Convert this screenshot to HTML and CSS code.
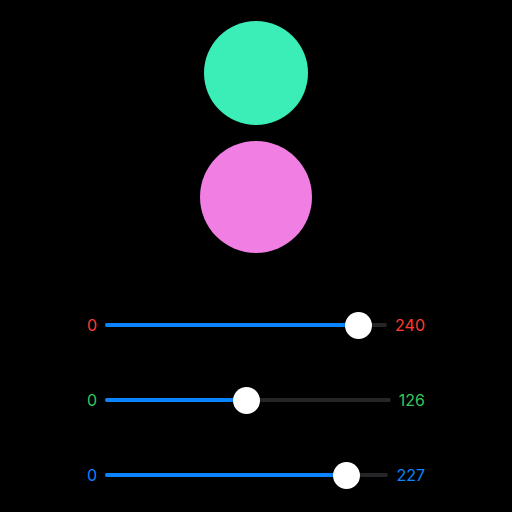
FILE: index.html
```html
<!DOCTYPE html>
<html lang="en">
<head>
<meta charset="utf-8">
<title>Color Mixer</title>
<link rel="stylesheet" href="styles.css">
</head>
<body>
  <main class="mixer">
    <div class="swatches">
      <div class="swatch swatch-inverse"></div>
      <div class="swatch swatch-mixed"></div>
    </div>
    <div class="controls">
      <div class="row red">
        <span class="label">0</span>
        <div class="slider" style="--v: 0.9412">
          <div class="track"><div class="fill"></div></div>
          <div class="knob"></div>
        </div>
        <span class="label">240</span>
      </div>
      <div class="row green">
        <span class="label">0</span>
        <div class="slider" style="--v: 0.4941">
          <div class="track"><div class="fill"></div></div>
          <div class="knob"></div>
        </div>
        <span class="label">126</span>
      </div>
      <div class="row blue">
        <span class="label">0</span>
        <div class="slider" style="--v: 0.8902">
          <div class="track"><div class="fill"></div></div>
          <div class="knob"></div>
        </div>
        <span class="label">227</span>
      </div>
    </div>
  </main>
</body>
</html>
```
FILE: styles.css
```css
html, body {
  margin: 0;
  padding: 0;
  background: #000;
}

body {
  width: 512px;
  height: 512px;
  overflow: hidden;
  font-family: Inter, "Liberation Sans", sans-serif;
}

.mixer {
  display: flex;
  flex-direction: column;
  align-items: center;
  padding-top: 21px;
}

.swatches {
  display: flex;
  flex-direction: column;
  align-items: center;
  gap: 16px;
}

.swatch {
  border-radius: 50%;
}

.swatch-inverse {
  width: 104px;
  height: 104px;
  background: #3bedb7;
}

.swatch-mixed {
  width: 112px;
  height: 112px;
  background: rgb(240, 126, 227);
}

.controls {
  margin-top: 58px;
  width: 338px;
  display: flex;
  flex-direction: column;
  gap: 47px;
}

.row {
  display: flex;
  align-items: center;
  gap: 8px;
  height: 28px;
  font-size: 16px;
}

.row.red { color: #ff3b30; }
.row.green { color: #34c759; }
.row.blue { color: #0a84ff; }

.label {
  line-height: 1;
}

.slider {
  --knob: 27px;
  position: relative;
  flex: 1;
  height: 28px;
  display: flex;
  align-items: center;
}

.track {
  width: 100%;
  height: 4px;
  border-radius: 2px;
  background: #262628;
  overflow: hidden;
}

.fill {
  height: 100%;
  width: calc(var(--knob) / 2 + (100% - var(--knob)) * var(--v));
  background: #0a84ff;
}

.knob {
  position: absolute;
  top: 50%;
  left: calc((100% - var(--knob)) * var(--v));
  width: var(--knob);
  height: var(--knob);
  margin-top: calc(var(--knob) / -2);
  border-radius: 50%;
  background: #fff;
  box-shadow: 0 1px 3px rgba(0, 0, 0, 0.25);
}
```
